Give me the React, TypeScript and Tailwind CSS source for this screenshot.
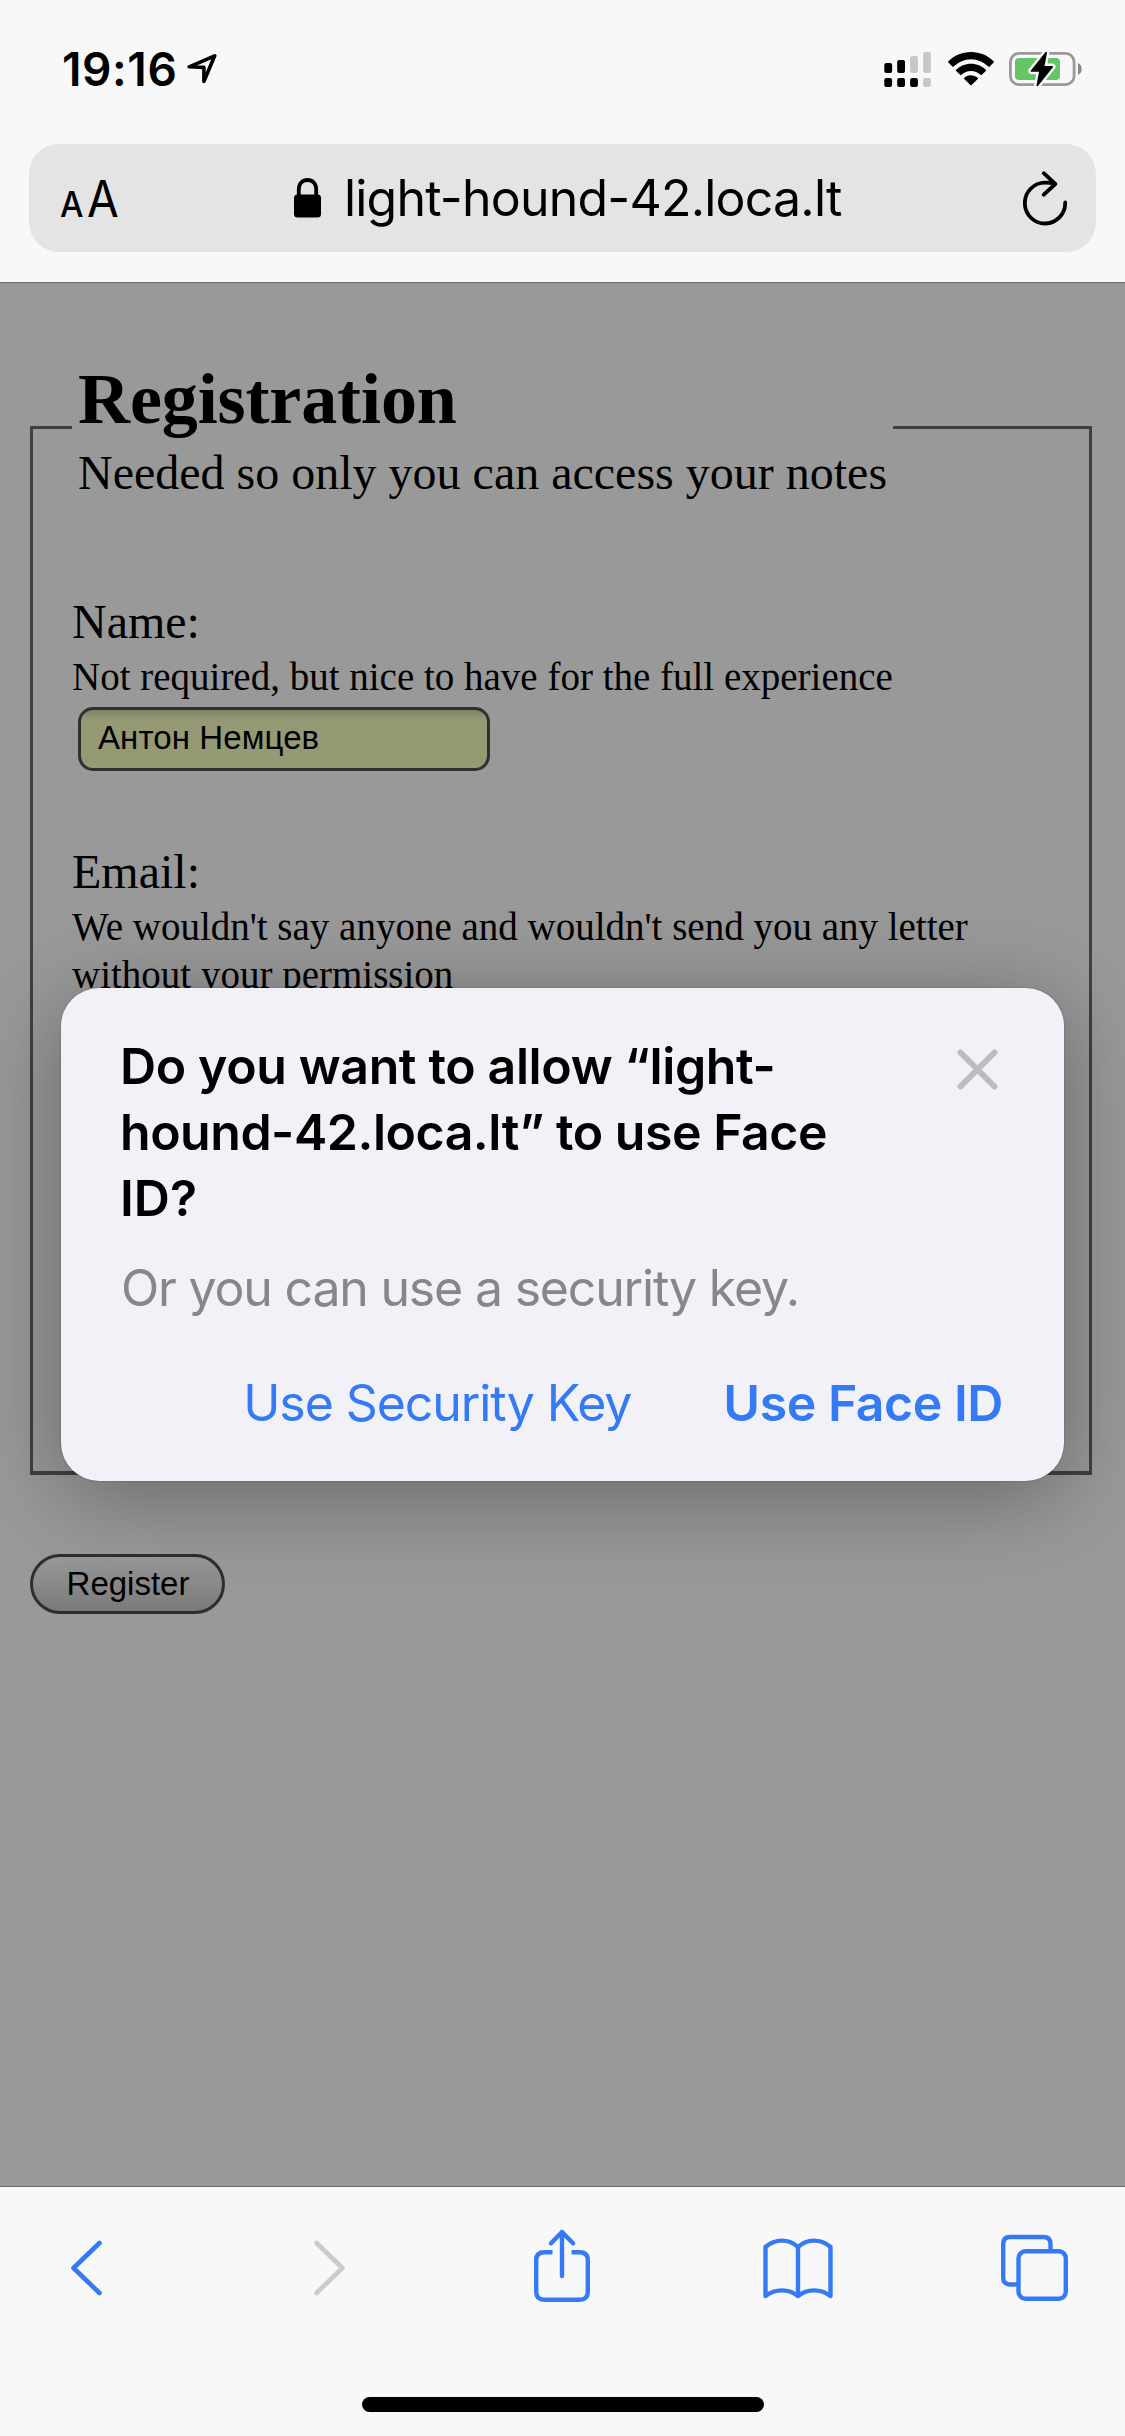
function StatusBar() {
  return (
    <div className="flex h-36 items-start justify-between pt-[42px] pr-[43px] pl-[62px]">
      <div className="flex h-[54px] items-center">
        <span className="text-[46px] leading-[54px] font-semibold tracking-[0.6px]">19:16</span>
        <svg className="ml-[8px] h-9 w-8" viewBox="0 0 32 36" fill="none" stroke="#000" strokeWidth="3.6" strokeLinejoin="round" strokeLinecap="round">
          <path d="M29.700 4.800L4.200 15.800L18.900 16.400V30.500Z" />
        </svg>
      </div>
      <div className="flex items-start pt-[10px]">
        <svg className="h-[36px] w-[48px]" viewBox="0 0 48 36">
          <rect x="0.3" y="11" width="7.8" height="10" rx="2" />
          <rect x="13.2" y="8" width="7.8" height="13" rx="2" />
          <rect x="26.1" y="4" width="7.8" height="17" rx="2" fill="#c7c7c7" />
          <rect x="39.1" y="0" width="7.8" height="21" rx="2" fill="#c7c7c7" />
          <rect x="0.3" y="26" width="7.8" height="9" rx="2" />
          <rect x="13.2" y="26" width="7.8" height="9" rx="2" />
          <rect x="26.1" y="26" width="7.8" height="9" rx="2" />
          <rect x="39.1" y="26" width="7.8" height="9" rx="2" fill="#c7c7c7" />
        </svg>
        <svg className="ml-[16px] h-[34px] w-[46px]" viewBox="0 0 46 34">
          <path d="M23 0C14 0 6 3.600 0.400 9.200a.9.9 0 0 0 0 1.300L4.300 14.400a.9.9 0 0 0 1.300 0A25 25 0 0 1 40.400 14.400a.9.9 0 0 0 1.300 0L45.600 10.500a.9.9 0 0 0 0-1.300C40 3.600 32 0 23 0Z" />
          <path d="M23 11.700C17.200 11.700 12 14 8.200 17.700a.9.9 0 0 0 0 1.300L12.100 22.700a.9.9 0 0 0 1.300 0 14 14 0 0 1 19.200 0 .9.900 0 0 0 1.300 0L37.800 19a.9.9 0 0 0 0-1.300C34 14 28.800 11.700 23 11.700Z" />
          <path d="M23 23.200c-2.600 0-5 1-6.700 2.600a.9.9 0 0 0 0 1.300L22.400 33a.9.9 0 0 0 1.200 0l6.100-5.900a.9.9 0 0 0 0-1.300A10 10 0 0 0 23 23.200Z" />
        </svg>
        <svg className="-mt-[2px] ml-[15px] h-[38px] w-[73px]" viewBox="0 0 73 38">
          <rect x="1.400" y="3.400" width="63.700" height="31.200" rx="8.500" fill="none" stroke="#999" strokeWidth="2.800" />
          <path d="M69 13c2.300 1 3.700 3 3.700 6s-1.400 5-3.700 6Z" fill="#888" />
          <rect x="6" y="8" width="45" height="22" rx="4" fill="#65c466" />
          <path d="M37.200 2.500L22.500 21H31L28.300 35.500L43.300 16.800H34.600Z" fill="#f8f8f8" stroke="#f8f8f8" strokeWidth="6.500" strokeLinejoin="round" />
          <path d="M37.200 2.500L22.500 21H31L28.300 35.500L43.300 16.800H34.600Z" stroke="#000" strokeWidth="1.600" strokeLinejoin="round" />
        </svg>
      </div>
    </div>
  );
}

function AddressBar() {
  return (
    <div className="mx-[29px] flex h-[108px] items-center rounded-[30px] bg-[#e4e4e4] pr-[27px] pl-[31px]">
      <div className="mt-[7px] flex w-[234px] items-baseline leading-[66px]">
        <span className="inline-block w-[27px] origin-left scale-x-[0.92] text-[36px] font-medium">A</span>
        <span className="inline-block origin-left scale-x-[0.92] text-[50px]">A</span>
      </div>
      <svg className="h-10 w-[27px]" viewBox="0 0 27 40">
        <rect x="0" y="16.500" width="27" height="23" rx="3.500" />
        <path d="M4.800 18V11.500C4.800 5.500 8.400 2 13.500 2S22.200 5.500 22.200 11.500V18" fill="none" stroke="#000" strokeWidth="3.800" />
      </svg>
      <span className="ml-[23px] text-[50px] leading-[66px] tracking-[-0.8px]">light-hound-42.loca.lt</span>
      <svg className="ml-auto h-[56px] w-[46px]" viewBox="0 0 46 56" fill="none" stroke="#000" strokeWidth="3.800" strokeLinecap="round" strokeLinejoin="round">
        <path d="M42.200 32.500A20.200 20.400 0 1 1 22 12.700C25.500 12.700 28.500 13 32.300 14M20.800 3.200L32.300 14L20.800 24.700" />
      </svg>
    </div>
  );
}

function RegistrationForm() {
  return (
    <div className="px-[30px] pt-[74px] font-['Liberation_Serif',serif] text-[48px] leading-[56px]">
      <fieldset className="h-[1118px] w-[1062px] border-[3px] border-b-4 border-[#404040] px-[39px]">
        <legend className="h-[141px] px-[6px]">
          <h1 className="text-[72px] leading-[84px] font-bold tracking-[-0.1px]">Registration</h1>
          <p className="mt-1 w-[809px] whitespace-nowrap">Needed so only you can access your notes</p>
        </legend>
        <div className="mt-[96px]">
          <label className="block">Name:</label>
          <p className="mt-[3px] text-[39px] leading-[48px]">Not required, but nice to have for the full experience</p>
          <div className="mt-[6px] ml-[6px] flex h-16 w-[412px] items-center rounded-[15px] border-[3px] border-[#303030] bg-[linear-gradient(#7f8263,#959a74_10px)] px-[17px] font-['Liberation_Sans',sans-serif] text-[33px] leading-[38px] tracking-[0.1px]">
            <span className="-mt-[3px]">Антон Немцев</span>
          </div>
        </div>
        <div className="mt-[73px]">
          <label className="block">Email:</label>
          <p className="mt-[3px] text-[39px] leading-[48px]">
            We wouldn't say anyone and wouldn't send you any letter
            <br />
            without your permission
          </p>
        </div>
      </fieldset>
      <button className="mt-[79px] block h-[60px] w-[195px] rounded-full border-[3px] border-[#2e2e2e] bg-linear-to-b from-[#999] to-[#7a7a7a] pl-px font-['Liberation_Sans',sans-serif] text-[33px] leading-[38px]">
        Register
      </button>
    </div>
  );
}

function PermissionDialog() {
  return (
    <div className="absolute top-[705px] left-[61px] h-[493px] w-[1003px] rounded-[38px] bg-[#f2f1f7] px-[60px] pt-[45px] text-[50px] leading-[66px] shadow-[0_15px_90px_rgba(0,0,0,0.33),0_0_2px_rgba(0,0,0,0.3)]">
      <div className="flex items-start justify-between">
        <h2 className="-ml-px font-semibold whitespace-nowrap">
          <span className="tracking-[-0.36px]">Do you want to allow “light-</span>
          <br />
          <span className="tracking-[-0.47px]">hound-42.loca.lt” to use Face</span>
          <br />
          ID?
        </h2>
        <svg className="mt-[15px] mr-[5px] h-[43px] w-[43px]" viewBox="0 0 43 43" stroke="#bbbbc0" strokeWidth="6" strokeLinecap="round">
          <path d="M4.500 4.500L38.500 38.500M38.500 4.500L4.500 38.500" />
        </svg>
      </div>
      <p className="mt-6 tracking-[-1.19px] text-[#87878b]">Or you can use a security key.</p>
      <div className="mt-[49px] flex justify-end pr-px text-[#347af6]">
        <button className="mr-[92px] tracking-[-1.07px]">Use Security Key</button>
        <button className="font-semibold tracking-[-0.47px]">Use Face ID</button>
      </div>
    </div>
  );
}

function Toolbar() {
  return (
    <div className="h-[250px] border-t border-[#6a6a6a] bg-[#f8f8f8]">
      <div className="flex h-[160px] items-center pt-[2px] pl-[70px] text-[#347af6]">
        <svg className="h-[60px] w-[34px]" viewBox="0 0 34 60" fill="none" stroke="currentColor" strokeWidth="4.600" strokeLinecap="round" strokeLinejoin="round">
          <path d="M29.500 5L3.500 30L29.500 55" />
        </svg>
        <svg className="ml-[208px] h-[60px] w-[34px] text-[#cbcbcb]" viewBox="0 0 34 60" fill="none" stroke="currentColor" strokeWidth="4.600" strokeLinecap="round" strokeLinejoin="round">
          <path d="M4.500 5L30.500 30L4.500 55" />
        </svg>
        <svg className="-mt-2 ml-[187px] h-[76px] w-[58px]" viewBox="0 0 58 76" fill="none" stroke="currentColor" strokeWidth="4.400" strokeLinejoin="round">
          <path d="M19.500 26.300H11.500Q3.200 26.300 3.200 34V66Q3.200 73.700 11.500 73.700H46.500Q54.800 73.700 54.800 66V34Q54.800 26.300 46.500 26.300H38.500" />
          <path d="M29 50V6M18 17.300L29 6L40 17.300" strokeLinecap="round" />
        </svg>
        <svg className="ml-[171px] h-[64px] w-[72px]" viewBox="0 0 72 64" fill="none" stroke="currentColor" strokeWidth="4.400" strokeLinejoin="round" strokeLinecap="round">
          <path d="M36 11C27 2.500 13 2.500 3.500 11V60C13 52.500 27 52.500 36 60C45 52.500 59 52.500 68.500 60V11C59 2.500 45 2.500 36 11V60" />
        </svg>
        <svg className="ml-[165px] h-[68px] w-[70px]" viewBox="0 0 70 68" fill="none" stroke="currentColor" strokeWidth="4.400">
          <rect x="19.500" y="17.300" width="47.300" height="47.500" rx="7" />
          <path d="M19.500 50.500H11Q4.200 50.500 4.200 43.500V10Q4.200 3 11 3H44.500Q51.500 3 51.500 10V17" />
        </svg>
      </div>
      <div className="mx-auto mt-[50px] h-[15px] w-[402px] rounded-full bg-black" />
    </div>
  );
}

export default function App() {
  return (
    <div className="flex h-[2436px] w-[1125px] flex-col overflow-hidden bg-[#f8f8f8] font-[Inter,sans-serif] text-black">
      <header className="h-[283px] border-b border-[#6a6a6a]">
        <StatusBar />
        <AddressBar />
      </header>
      <main className="relative h-[1903px] overflow-hidden bg-[#999]">
        <RegistrationForm />
        <PermissionDialog />
      </main>
      <Toolbar />
    </div>
  );
}
